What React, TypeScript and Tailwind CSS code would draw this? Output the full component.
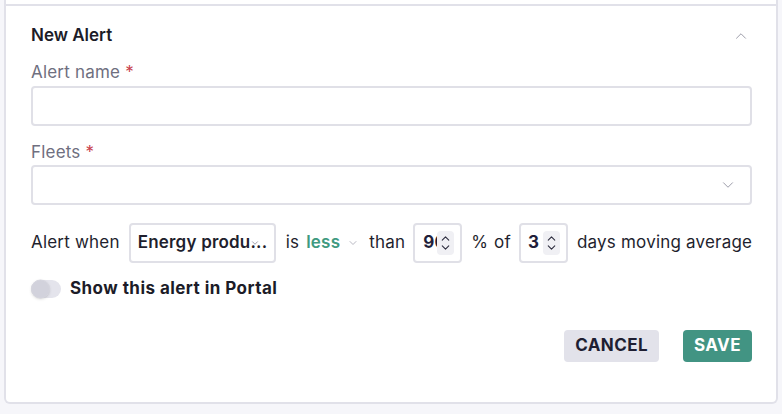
import { ChevronDown, ChevronUp } from "lucide-react";

function Spinner() {
  return (
    <div className="absolute right-[6px] top-1/2 flex h-[24px] w-[17px] -translate-y-1/2 flex-col items-center justify-center rounded bg-[#f0f0f4] text-[#2e2e40]">
      <ChevronUp className="-mb-[2px] h-[13px] w-[13px]" strokeWidth={2} />
      <ChevronDown className="-mt-[2px] h-[13px] w-[13px]" strokeWidth={2} />
    </div>
  );
}

export default function App() {
  return (
    <div
      className="h-[414px] w-full bg-[#f6f6fa] px-[4px] text-[17px] tracking-[0.2px] text-[#1f1f2e]"
      style={{ fontFamily: "Inter, 'Noto Sans', sans-serif" }}
    >
      <div className="rounded-b-md border-x-2 border-b-2 border-[#e1e1e9] bg-white">
        <div className="h-[4px]" />
        <section className="border-t-2 border-[#e1e1e9] pb-[40px] pl-[25px] pr-6 pt-[18px]">
          {/* header */}
          <div className="flex h-6 items-center justify-between">
            <h2 className="text-[17px] font-semibold tracking-normal text-[#1c1c28]">New Alert</h2>
            <ChevronUp className="mr-[2px] h-[18px] w-[18px] text-[#9a9aa8]" strokeWidth={1.3} />
          </div>

          {/* alert name */}
          <label className="mt-[12px] block leading-6 text-[#6f6f80]">
            Alert name <span className="text-[#c8414b]">*</span>
          </label>
          <input
            type="text"
            className="mt-[2px] block h-10 w-full rounded border-2 border-[#e0e0e7] bg-white px-3 outline-none"
          />

          {/* fleets */}
          <label className="mt-[14px] block leading-6 text-[#6f6f80]">
            Fleets <span className="text-[#c8414b]">*</span>
          </label>
          <div className="mt-[1px] flex h-10 w-full items-center justify-end rounded border-2 border-[#e0e0e7] pr-[13px]">
            <ChevronDown className="h-[18px] w-[18px] text-[#9a9aa8]" strokeWidth={1.3} />
          </div>

          {/* condition row */}
          <div className="mt-[18px] flex items-center whitespace-nowrap text-[#1f1f2e] [&>*]:shrink-0">
            <span>Alert when</span>
            <div className="relative ml-[9px] flex h-10 w-[147px] items-center overflow-hidden rounded border-2 border-[#e0e0e7] pl-[7px]">
              <span className="font-semibold text-[#1f1f2e]">Energy produ...</span>
              <ChevronDown className="absolute right-[14px] top-1/2 h-[10px] w-[10px] -translate-y-1/2 text-[#8e8e9c]" strokeWidth={2} />
            </div>
            <span className="ml-[10px]">is</span>
            <span className="ml-[7px] font-semibold text-[#3f9a80]">less</span>
            <ChevronDown className="ml-[7px] h-[12px] w-[12px] text-[#a0a0ae]" strokeWidth={1.5} />
            <span className="ml-[10px]">than</span>
            <div className="relative ml-[8px] flex h-10 w-[49px] items-center overflow-hidden rounded border-2 border-[#e0e0e7] pl-[8px]">
              <span className="font-bold text-[#1f1f3a]">90</span>
              <Spinner />
            </div>
            <span className="ml-[9px]">%</span>
            <span className="ml-[6px]">of</span>
            <div className="relative ml-[8px] flex h-10 w-[49px] items-center overflow-hidden rounded border-2 border-[#e0e0e7] pl-[7px]">
              <span className="font-bold text-[#1f1f3a]">3</span>
              <Spinner />
            </div>
            <span className="ml-[9px]">days moving average</span>
          </div>

          {/* toggle */}
          <div className="mt-[14px] flex h-6 items-center">
            <div className="relative h-[18px] w-[30px] rounded-full bg-[#e4e4ec]">
              <div className="absolute left-0 top-1/2 h-[19px] w-[19px] -translate-y-1/2 rounded-full border border-[#d6d6df] bg-[#d2d2dc] shadow-sm" />
            </div>
            <span className="ml-[9px] font-bold tracking-[0.45px] text-[#1c1c28]">Show this alert in Portal</span>
          </div>

          {/* actions */}
          <div className="mt-[29px] flex justify-end gap-6">
            <button className="h-8 rounded bg-[#e2e2ea] px-[11px] font-bold uppercase tracking-wide text-[#1e1e32]">
              Cancel
            </button>
            <button className="h-8 rounded bg-[#429483] px-[11px] font-bold uppercase tracking-wide text-white">
              Save
            </button>
          </div>
        </section>
      </div>
    </div>
  );
}
